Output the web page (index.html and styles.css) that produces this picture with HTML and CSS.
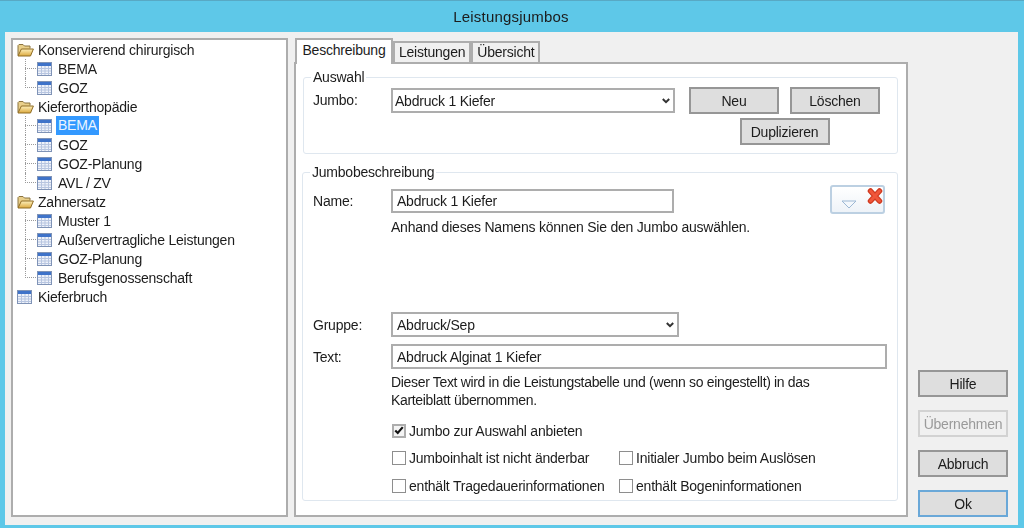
FILE: index.html
```html
<!DOCTYPE html>
<html lang="de">
<head>
  <meta charset="UTF-8" />
  <title>Leistungsjumbos</title>
  <link rel="stylesheet" href="styles.css">
</head>
<body>
  <!-- Shared tree icons -->
  <svg class="icon-defs" width="0" height="0">
    <defs>
      <linearGradient id="folderFront" x1="0" y1="0" x2="0" y2="1">
        <stop offset="0" stop-color="#fdf0bc"/>
        <stop offset="1" stop-color="#dca93e"/>
      </linearGradient>
    </defs>
    <symbol id="folder" viewBox="0 0 17 14">
      <path d="M1 12.5V2.5L2 1.5H6L7.5 3H13V5.5" fill="#e9cf8a" stroke="#8b7440"/>
      <path d="M1 13H13.5L16.4 6H4.4Z" fill="url(#folderFront)" stroke="#8f6c24"/>
    </symbol>
    <symbol id="table" viewBox="0 0 15 14">
      <rect x="0.5" y="0.5" width="14" height="13" fill="#eef2fa" stroke="#7f93b6"/>
      <rect x="1" y="1" width="13" height="3" fill="#3f73c9"/>
      <path d="M1 6.5H14M1 9H14M1 11.5H14M4.5 4V13M8 4V13M11.5 4V13" stroke="#b7c5e0"/>
    </symbol>
    <symbol id="chevron" viewBox="0 0 8 6">
      <path d="M0.8 1L4 4.2L7.2 1" fill="none" stroke="#333" stroke-width="2"/>
    </symbol>
  </svg>

  <div class="window">
    <div class="titlebar">Leistungsjumbos</div>

    <div class="client">
      <!-- Tree -->
      <ul class="tree">
        <li class="tree-row"><svg class="ico-folder"><use href="#folder"/></svg>Konservierend chirurgisch</li>
        <li>
          <ul class="tree-children">
            <li class="tree-row child"><svg class="ico-table"><use href="#table"/></svg><span>BEMA</span></li>
            <li class="tree-row child"><svg class="ico-table"><use href="#table"/></svg><span>GOZ</span></li>
          </ul>
        </li>
        <li class="tree-row"><svg class="ico-folder"><use href="#folder"/></svg>Kieferorthopädie</li>
        <li>
          <ul class="tree-children">
            <li class="tree-row child"><svg class="ico-table"><use href="#table"/></svg><span class="selected">BEMA</span></li>
            <li class="tree-row child"><svg class="ico-table"><use href="#table"/></svg><span>GOZ</span></li>
            <li class="tree-row child"><svg class="ico-table"><use href="#table"/></svg><span>GOZ-Planung</span></li>
            <li class="tree-row child"><svg class="ico-table"><use href="#table"/></svg><span>AVL / ZV</span></li>
          </ul>
        </li>
        <li class="tree-row"><svg class="ico-folder"><use href="#folder"/></svg>Zahnersatz</li>
        <li>
          <ul class="tree-children">
            <li class="tree-row child"><svg class="ico-table"><use href="#table"/></svg><span>Muster 1</span></li>
            <li class="tree-row child"><svg class="ico-table"><use href="#table"/></svg><span>Außervertragliche Leistungen</span></li>
            <li class="tree-row child"><svg class="ico-table"><use href="#table"/></svg><span>GOZ-Planung</span></li>
            <li class="tree-row child"><svg class="ico-table"><use href="#table"/></svg><span>Berufsgenossenschaft</span></li>
          </ul>
        </li>
        <li class="tree-row"><svg class="ico-table"><use href="#table"/></svg>Kieferbruch</li>
      </ul>

      <!-- Tabs -->
      <div class="tabs">
        <div class="tab-strip">
          <div class="tab active">Beschreibung</div>
          <div class="tab">Leistungen</div>
          <div class="tab">Übersicht</div>
        </div>

        <div class="tab-panel">
          <fieldset class="group group-select">
            <legend>Auswahl</legend>
            <div class="select-row">
              <span class="field-label">Jumbo:</span>
              <div class="combo combo-jumbo">Abdruck 1 Kiefer<svg class="chevron"><use href="#chevron"/></svg></div>
              <div class="select-buttons">
                <div class="btn">Neu</div>
                <div class="btn">Löschen</div>
                <div class="btn">Duplizieren</div>
              </div>
            </div>
          </fieldset>

          <fieldset class="group group-desc">
            <legend>Jumbobeschreibung</legend>

            <div class="form-row row-name">
              <span class="field-label">Name:</span>
              <div class="field field-name">Abdruck 1 Kiefer</div>
              <div class="icon-btn">
                <svg width="16" height="9" viewBox="0 0 16 9" class="icon-down">
                  <path d="M1 1H15L8 8Z" fill="#f4f8fc" stroke="#9db8d4"/>
                </svg>
                <svg width="16" height="16" viewBox="0 0 16 16" class="icon-del">
                  <path d="M3.5 3L12.5 13M12.5 3L3.5 13" fill="none" stroke="#cf3a20" stroke-width="5.5" stroke-linecap="round"/>
                  <path d="M3.5 3L12.5 13M12.5 3L3.5 13" fill="none" stroke="#f0563a" stroke-width="3" stroke-linecap="round"/>
                </svg>
              </div>
            </div>
            <p class="hint hint-name">Anhand dieses Namens können Sie den Jumbo auswählen.</p>

            <div class="form-row row-gruppe">
              <span class="field-label">Gruppe:</span>
              <div class="combo combo-gruppe">Abdruck/Sep<svg class="chevron"><use href="#chevron"/></svg></div>
            </div>
            <div class="form-row row-text">
              <span class="field-label">Text:</span>
              <div class="field field-text">Abdruck Alginat 1 Kiefer</div>
            </div>
            <p class="hint hint-text">Dieser Text wird in die Leistungstabelle und (wenn so eingestellt) in das<br>Karteiblatt übernommen.</p>

            <div class="options">
              <div class="option option-wide">
                <span class="box checked"><svg width="12" height="11" viewBox="0 0 12 11"><path d="M1.5 5.5L4.5 8.5L10.5 1.5" fill="none" stroke="#111" stroke-width="2.6"/></svg></span>Jumbo zur Auswahl anbieten
              </div>
              <div class="option"><span class="box"></span>Jumboinhalt ist nicht änderbar</div>
              <div class="option"><span class="box"></span>Initialer Jumbo beim Auslösen</div>
              <div class="option"><span class="box"></span>enthält Tragedauerinformationen</div>
              <div class="option"><span class="box"></span>enthält Bogeninformationen</div>
            </div>
          </fieldset>
        </div>
      </div>

      <!-- Dialog buttons -->
      <div class="dialog-buttons">
        <div class="btn">Hilfe</div>
        <div class="btn disabled">Übernehmen</div>
        <div class="btn">Abbruch</div>
        <div class="btn default">Ok</div>
      </div>
    </div>
  </div>
</body>
</html>
```

FILE: styles.css
```css
html, body {
  margin: 0;
  height: 100%;
  overflow: hidden;
}

body {
  background: #5ec8e8;
  font-family: "Liberation Sans", Arial, sans-serif;
  font-size: 14px;
  letter-spacing: -0.22px;
  color: #1c1c1c;
}

.icon-defs {
  display: block;
  height: 0;
}

/* the reference is a slightly soft capture */
.window {
  height: 528px;
  display: flex;
  flex-direction: column;
  padding: 0 6px 3px 5px;
  box-sizing: border-box;
  border-top: 1px solid #58a9c4;
  filter: blur(0.4px);
}

.titlebar {
  height: 31px;
  flex: none;
  display: flex;
  align-items: center;
  justify-content: center;
  padding-right: 1px;
  font-size: 15px;
  letter-spacing: 0.2px;
  color: #1c1c1c;
}

.client {
  flex: 1;
  display: flex;
  gap: 6px;
  padding: 6px 9px 8px 6px;
  background: #f0f0f0;
}

/* Tree */
.tree,
.tree-children {
  list-style: none;
  margin: 0;
  padding: 0;
}

.tree {
  width: 277px;
  box-sizing: border-box;
  padding: 0 0 0 4px;
  background: #fff;
  border: 2px solid #adadad;
}

.tree-row {
  height: 19px;
  display: flex;
  align-items: center;
  white-space: nowrap;
}

.ico-folder {
  width: 17px;
  height: 14px;
  margin-right: 4px;
}

.ico-table {
  width: 15px;
  height: 14px;
  margin-right: 6px;
}

.child {
  position: relative;
  padding-left: 20px;
}

/* dotted tree lines */
.child::before {
  content: "";
  position: absolute;
  left: 8px;
  top: 9px;
  width: 11px;
  border-top: 1px dotted #9a9a9a;
}

.child::after {
  content: "";
  position: absolute;
  left: 8px;
  top: 0;
  height: 19px;
  border-left: 1px dotted #9a9a9a;
}

.child:last-child::after {
  height: 10px;
}

.selected {
  background: #3399ff;
  color: #eaf5ff;
  margin-left: -2px;
  padding: 0 2px;
  line-height: 19px;
}

/* Tabs */
.tabs {
  width: 614px;
  display: flex;
  flex-direction: column;
}

.tab-strip {
  height: 24px;
  display: flex;
  align-items: flex-end;
  padding-left: 1px;
}

.tab {
  height: 21px;
  line-height: 19px;
  padding: 0 4px;
  background: #f0f0f0;
  border: 2px solid #adadad;
  border-bottom: none;
  box-sizing: border-box;
}

.tab.active {
  height: 26px;
  line-height: 20px;
  padding: 0 5.5px;
  margin-bottom: -2px;
  background: #fff;
  position: relative;
  z-index: 1;
}

.tab-panel {
  flex: 1;
  padding: 5px 8px 0 7px;
  background: #fff;
  border: 2px solid #adadad;
}

.group {
  margin: 0;
  padding: 0;
  border: 1px solid #dfe7ef;
  border-radius: 3px;
  min-width: 0;
}

.group legend {
  padding: 0 2px;
  line-height: 16px;
}

.group-select {
  padding: 2px 0 8px 9px;
}

.group-select legend {
  margin-left: -2px;
}

.select-row {
  display: flex;
  align-items: flex-start;
}

.field-label {
  width: 78px;
  flex: none;
}

.select-row .field-label {
  line-height: 27px;
}

.combo,
.field {
  box-sizing: border-box;
  flex: none;
  display: flex;
  align-items: center;
  justify-content: space-between;
  padding: 0 3px 0 4px;
  background: #fff;
  border: 2px solid #adadad;
}

.combo-jumbo {
  width: 284px;
  height: 25px;
  margin: 1px 14px 0 0;
  padding-left: 2px;
}

.chevron {
  width: 8px;
  height: 6px;
}

.select-buttons {
  width: 191px;
  display: flex;
  flex-wrap: wrap;
  justify-content: center;
  gap: 4px 11px;
}

.btn {
  width: 90px;
  height: 27px;
  box-sizing: border-box;
  display: flex;
  align-items: center;
  justify-content: center;
  background: #dedede;
  border: 2px solid #969696;
}

.btn.disabled {
  background: #f0f0f0;
  border-color: #d2d2d2;
  color: #9a9a9a;
}

.btn.default {
  border-color: #6aa8d8;
}

/* Jumbobeschreibung */
.group-desc {
  margin: 10px 0 0 -1px;
  height: 337px;
  box-sizing: border-box;
  padding: 5px 0 0 10px;
}

.group-desc legend {
  margin-left: -3px;
}

.form-row {
  display: flex;
  align-items: center;
}

.row-name {
  align-items: flex-start;
}

.row-name .field-label {
  line-height: 33px;
}

.field-name {
  width: 283px;
  height: 24px;
  margin-top: 4px;
}

.icon-btn {
  width: 55px;
  height: 29px;
  margin-left: 156px;
  box-sizing: border-box;
  display: flex;
  padding: 0 0 0 9px;
  justify-content: space-between;
  background: linear-gradient(#ffffff, #eef3f8);
  border: 2px solid #bcd0e2;
  border-radius: 3px;
}

.icon-down {
  margin-top: 13px;
}

.icon-del {
  margin: 1px 0 0 0;
}

.hint {
  margin: 0 0 0 78px;
  line-height: 18px;
}

.row-gruppe {
  margin-top: 76px;
}

.combo-gruppe {
  width: 288px;
  height: 25px;
}

.row-text {
  margin-top: 7px;
}

.field-text {
  width: 496px;
  height: 25px;
}

.hint-text {
  margin-top: 4px;
  letter-spacing: -0.33px;
}

.options {
  margin: 8px 0 0 79px;
  display: grid;
  grid-template-columns: 227px 1fr;
  grid-auto-rows: 27.5px;
}

.option {
  display: flex;
  align-items: center;
  gap: 3px;
  white-space: nowrap;
}

.option-wide {
  grid-column: 1 / -1;
}

.box {
  width: 14px;
  height: 14px;
  flex: none;
  box-sizing: border-box;
  display: flex;
  align-items: center;
  justify-content: center;
  background: #fff;
  border: 1px solid #8e8e8e;
}

.box.checked {
  background: #f4f4f4;
  border: 2px solid #adadad;
}

/* Dialog buttons */
.dialog-buttons {
  margin-left: 4px;
  width: 90px;
  display: flex;
  flex-direction: column;
  justify-content: flex-end;
  gap: 13px;
}
```
